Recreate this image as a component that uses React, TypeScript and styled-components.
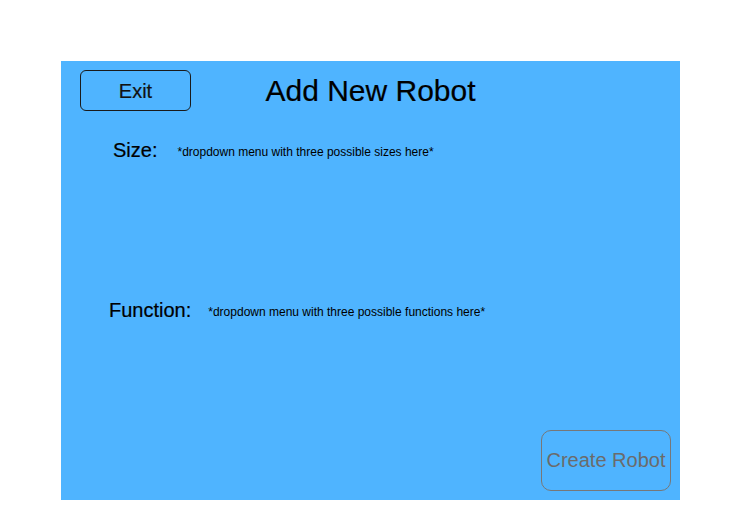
import React from 'react';
import styled, { createGlobalStyle } from 'styled-components';

const GlobalStyle = createGlobalStyle`
  html, body {
    margin: 0;
    padding: 0;
    background: #ffffff;
    font-family: "Liberation Sans", Arial, Helvetica, sans-serif;
  }
`;

const Page = styled.div`
  width: 741px;
  height: 531px;
  padding: 61px 0 0 61px;
  box-sizing: border-box;
`;

const Panel = styled.main`
  width: 619px;
  height: 439px;
  box-sizing: border-box;
  padding: 9px;
  background: #4fb4ff;
  display: flex;
  flex-direction: column;
`;

const Header = styled.header`
  margin: 0 10px;
  display: grid;
  grid-template-columns: 111px 1fr 111px;
  align-items: center;
`;

const ExitButton = styled.button`
  width: 111px;
  height: 41px;
  box-sizing: border-box;
  border: 1px solid #1a1a1a;
  border-radius: 6px;
  background: transparent;
  color: #111111;
  font-family: inherit;
  font-size: 20px;
  line-height: 1;
  padding: 0;
  -webkit-text-stroke: 0.2px #111111;
  cursor: pointer;
`;

const Title = styled.h1`
  margin: 0;
  text-align: center;
  font-size: 30px;
  font-weight: 400;
  line-height: 41px;
  color: #000000;
  -webkit-text-stroke: 0.2px #000000;
`;

const Field = styled.div<{ $indent: number; $gap: number; $top: number }>`
  margin-top: ${(p) => p.$top}px;
  padding-left: ${(p) => p.$indent}px;
  display: flex;
  align-items: baseline;
  gap: ${(p) => p.$gap}px;
`;

const Label = styled.span`
  font-size: 20px;
  line-height: 24px;
  color: #000000;
  -webkit-text-stroke: 0.2px #000000;
`;

const Placeholder = styled.span`
  font-size: 12px;
  line-height: 14px;
  color: #000000;
  position: relative;
  top: -1px;
`;

const Footer = styled.footer`
  margin-top: auto;
  display: flex;
  justify-content: flex-end;
`;

const CreateButton = styled.button`
  width: 130px;
  height: 61px;
  box-sizing: border-box;
  border: 1px solid #777777;
  border-radius: 10px;
  background: transparent;
  color: #6b6b6b;
  font-family: inherit;
  font-size: 20px;
  padding: 0;
  cursor: pointer;
`;

export default function App() {
  return (
    <>
      <GlobalStyle />
      <Page>
        <Panel>
          <Header>
            <ExitButton>Exit</ExitButton>
            <Title>Add New Robot</Title>
            <span />
          </Header>
          <Field $indent={43} $gap={20} $top={27}>
            <Label>Size:</Label>
            <Placeholder>*dropdown menu with three possible sizes here*</Placeholder>
          </Field>
          <Field $indent={39} $gap={17} $top={136}>
            <Label>Function:</Label>
            <Placeholder>*dropdown menu with three possible functions here*</Placeholder>
          </Field>
          <Footer>
            <CreateButton>Create Robot</CreateButton>
          </Footer>
        </Panel>
      </Page>
    </>
  );
}
